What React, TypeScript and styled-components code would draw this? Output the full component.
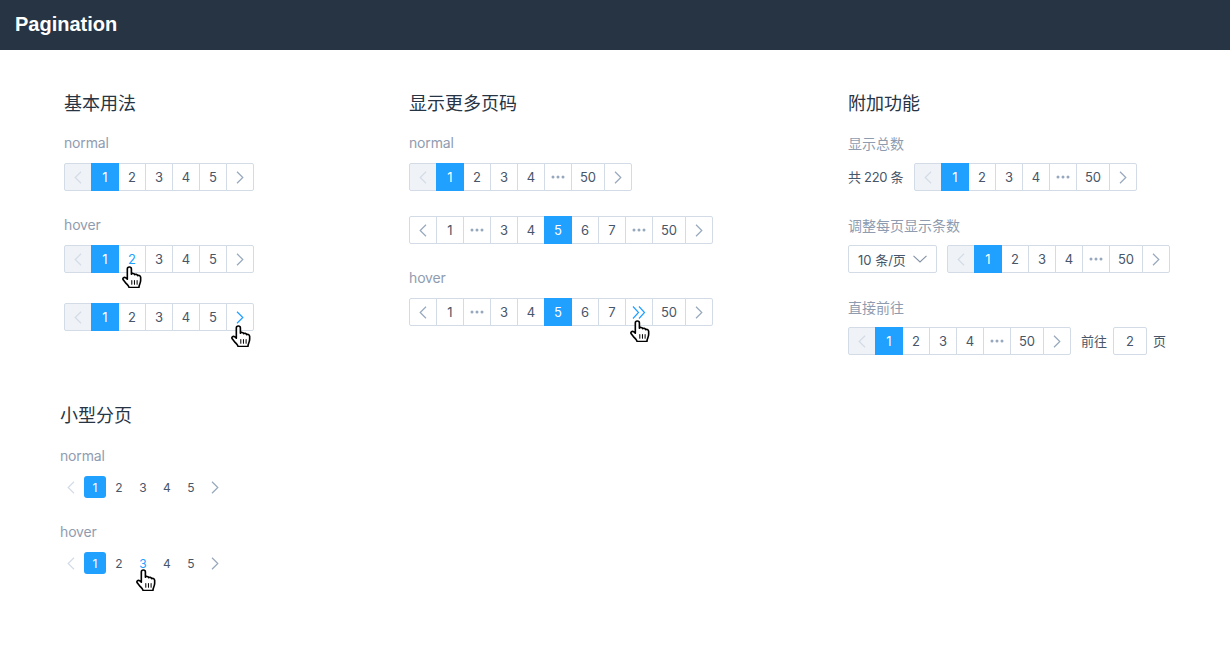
import React from "react";
import styled, { createGlobalStyle } from "styled-components";

const Global = createGlobalStyle`
  html, body { margin: 0; padding: 0; background: #fff; }
  body { font-family: Inter, "Noto Sans CJK SC", sans-serif; color: #475669; }
`;

const Page = styled.div`
  min-height: 100vh;
`;
const Header = styled.header`
  box-sizing: border-box;
  height: 50px;
  background: #273444;
  display: flex;
  align-items: center;
  padding: 0 0 3px 15px;
  color: #fff;
  font: bold 20px/24px "Liberation Sans", Arial, sans-serif;
`;
const Main = styled.main`
  padding-top: 40px;
`;
const TopRow = styled.div`
  display: flex;
  padding-left: 64px;
`;
const Column = styled.section<{ $w: number }>`
  width: ${(p) => p.$w}px;
  flex: none;
`;
const SmallSection = styled.section`
  margin-top: 47px;
  padding-left: 60px;
`;
const Title = styled.h2<{ $gap?: number }>`
  margin: 0 0 ${(p) => (p.$gap ?? 17) - 1}px;
  padding-top: 1px;
  font-size: 18px;
  font-weight: 400;
  line-height: 26px;
  color: #273444;
`;
const Label = styled.div<{ $top?: number; $cjk?: boolean }>`
  margin-top: ${(p) => p.$top ?? 0}px;
  margin-bottom: ${(p) => (p.$cjk ? 9 : 10)}px;
  padding-top: ${(p) => (p.$cjk ? 1 : 0)}px;
  font-size: 14px;
  line-height: 20px;
  letter-spacing: ${(p) => (p.$cjk ? 0 : -0.15)}px;
  color: #8f9cb0;
`;
const Line = styled.div<{ $top?: number; $gap?: number }>`
  display: flex;
  align-items: center;
  height: 28px;
  margin-top: ${(p) => p.$top ?? 0}px;
  gap: ${(p) => p.$gap ?? 10}px;
`;
const Pager = styled.div`
  display: flex;
  height: 28px;
  padding-left: 1px;
`;
const Cell = styled.div<{ $active?: boolean; $disabled?: boolean; $hover?: boolean; $wide?: boolean }>`
  position: relative;
  box-sizing: border-box;
  width: ${(p) => (p.$wide ? 34 : 28)}px;
  height: 28px;
  margin-left: -1px;
  display: flex;
  align-items: center;
  justify-content: center;
  font-size: 13px;
  border: 1px solid ${(p) => (p.$active ? "#20a0ff" : "#d3dce6")};
  background: ${(p) => (p.$active ? "#20a0ff" : p.$disabled ? "#eff2f7" : "#fff")};
  color: ${(p) => (p.$active ? "#fff" : p.$hover ? "#20a0ff" : "#475669")};
  z-index: ${(p) => (p.$active ? 1 : 0)};
  &:first-child { border-radius: 2px 0 0 2px; }
  &:last-child { border-radius: 0 2px 2px 0; }
`;
const SmallPager = styled.div`
  display: flex;
  gap: 2px;
  height: 22px;
`;
const SmallCell = styled.div<{ $active?: boolean; $hover?: boolean }>`
  position: relative;
  width: 22px;
  height: 22px;
  display: flex;
  align-items: center;
  justify-content: center;
  font-size: 12px;
  border-radius: 3px;
  background: ${(p) => (p.$active ? "#20a0ff" : "transparent")};
  color: ${(p) => (p.$active ? "#fff" : p.$hover ? "#20a0ff" : "#475669")};
`;
const Note = styled.span`
  font-size: 13px;
  line-height: 28px;
  color: #475669;
  white-space: nowrap;
`;
const Total = styled(Note)`
  width: 56px;
  flex: none;
  letter-spacing: -0.3px;
`;
const Select = styled.div`
  box-sizing: border-box;
  width: 89px;
  height: 28px;
  flex: none;
  display: flex;
  align-items: center;
  justify-content: space-between;
  padding: 0 9px;
  border: 1px solid #d3dce6;
  border-radius: 2px;
  font-size: 13px;
  white-space: nowrap;
`;
const JumpInput = styled.div`
  box-sizing: border-box;
  width: 34px;
  height: 28px;
  margin: 0 6px;
  display: flex;
  align-items: center;
  justify-content: center;
  border: 1px solid #d3dce6;
  border-radius: 2px;
  font-size: 13px;
`;
const Jump = styled.div`
  display: flex;
  align-items: center;
`;
const HandWrap = styled.span<{ $l: number; $t: number }>`
  position: absolute;
  left: ${(p) => p.$l}px;
  top: ${(p) => p.$t}px;
  width: 21px;
  height: 22px;
  z-index: 3;
`;

const Chevron = ({ dir, color }: { dir: "l" | "r"; color: string }) => (
  <svg width="8" height="13" viewBox="0 0 8 13" fill="none" stroke={color} strokeWidth="1.2">
    <path d={dir === "l" ? "M7 .8 1.2 6.5 7 12.2" : "M1 .8l5.8 5.7L1 12.2"} />
  </svg>
);
const DoubleChevron = () => (
  <svg width="14" height="13" viewBox="0 0 14 13" fill="none" stroke="#20a0ff" strokeWidth="1.2">
    <path d="M1 .5l5.5 6-5.5 6M7 .5l5.5 6-5.5 6" />
  </svg>
);
const Dots = () => (
  <svg width="14" height="4" viewBox="0 0 14 4" fill="#97a8be">
    <circle cx="2" cy="2" r="1.5" />
    <circle cx="7" cy="2" r="1.5" />
    <circle cx="12" cy="2" r="1.5" />
  </svg>
);
const Caret = () => (
  <svg width="14" height="8" viewBox="0 0 14 8" fill="none" stroke="#8492a6" strokeWidth="1.1">
    <path d="M.5.8 7 7 13.5.8" />
  </svg>
);
const Hand = ({ l, t }: { l: number; t: number }) => (
  <HandWrap $l={l} $t={t}>
    <svg width="21" height="22" viewBox="0.3 0 19.6 21.6" fill="#fff" stroke="#000" strokeWidth="1.6" strokeLinejoin="round" strokeLinecap="round">
      <path d="M6 13V3a2 2 0 0 1 4 0v5c.4-1 3-1 3.2.6.5-.8 2.7-.6 3 .9.6-.5 2.7-.2 2.9 1.6v3c0 2-.8 3.5-1.4 5l-.3 2H7.8c-.4-1.6-1.6-2.6-3-4L2 13.6c-1.3-1.5.8-3.2 2.3-2.1z" />
      <path d="M10.4 14.2v3.6M13 14.2v3.6M15.6 14.2v3.6" strokeWidth="1" fill="none" />
    </svg>
  </HandWrap>
);

type Item = number | "dots" | "more";
const short: Item[] = [1, 2, 3, 4, "dots", 50];
const five: Item[] = [1, 2, 3, 4, 5];
const mid: Item[] = [1, "dots", 3, 4, 5, 6, 7, "dots", 50];
const midHover: Item[] = [1, "dots", 3, 4, 5, 6, 7, "more", 50];

type PagerProps = {
  items: Item[];
  active?: number;
  hoverPage?: number;
  hoverNext?: boolean;
  hand?: [number, number];
};
const Pagination = ({ items, active = 1, hoverPage, hoverNext, hand }: PagerProps) => {
  const first = active === 1;
  return (
    <Pager>
      <Cell $disabled={first}>
        <Chevron dir="l" color={first ? "#d3dce6" : "#97a8be"} />
      </Cell>
      {items.map((it, i) => (
        <Cell key={i} $active={it === active} $hover={it === hoverPage} $wide={it === 50}>
          {it === "dots" ? <Dots /> : it === "more" ? <DoubleChevron /> : it}
          {hand && (it === hoverPage || it === "more") && <Hand l={hand[0]} t={hand[1]} />}
        </Cell>
      ))}
      <Cell>
        <Chevron dir="r" color={hoverNext ? "#20a0ff" : "#97a8be"} />
        {hoverNext && hand && <Hand l={hand[0]} t={hand[1]} />}
      </Cell>
    </Pager>
  );
};

const Small = ({ hoverPage }: { hoverPage?: number }) => (
  <SmallPager>
    <SmallCell>
      <Chevron dir="l" color="#d3dce6" />
    </SmallCell>
    {five.map((n) => (
      <SmallCell key={String(n)} $active={n === 1} $hover={n === hoverPage}>
        {n}
        {n === hoverPage && <Hand l={3} t={17} />}
      </SmallCell>
    ))}
    <SmallCell>
      <Chevron dir="r" color="#97a8be" />
    </SmallCell>
  </SmallPager>
);

export default function App() {
  return (
    <Page>
      <Global />
      <Header>Pagination</Header>
      <Main>
        <TopRow>
          <Column $w={345}>
            <Title>基本用法</Title>
            <Label>normal</Label>
            <Line><Pagination items={five} /></Line>
            <Label $top={24}>hover</Label>
            <Line><Pagination items={five} hoverPage={2} hand={[2, 20]} /></Line>
            <Line $top={30}><Pagination items={five} hoverNext hand={[3, 21]} /></Line>
          </Column>
          <Column $w={439}>
            <Title>显示更多页码</Title>
            <Label>normal</Label>
            <Line><Pagination items={short} /></Line>
            <Line $top={25}><Pagination items={mid} active={5} /></Line>
            <Label $top={24}>hover</Label>
            <Line><Pagination items={midHover} active={5} hand={[3, 21]} /></Line>
          </Column>
          <Column $w={340}>
            <Title>附加功能</Title>
            <Label $cjk>显示总数</Label>
            <Line><Total>共 220 条</Total><Pagination items={short} /></Line>
            <Label $cjk $top={24}>调整每页显示条数</Label>
            <Line>
              <Select>10 条/页<Caret /></Select>
              <Pagination items={short} />
            </Line>
            <Label $cjk $top={24}>直接前往</Label>
            <Line>
              <Pagination items={short} />
              <Jump><Note>前往</Note><JumpInput>2</JumpInput><Note>页</Note></Jump>
            </Line>
          </Column>
        </TopRow>
        <SmallSection>
          <Title $gap={18}>小型分页</Title>
          <Label>normal</Label>
          <Small />
          <Label $top={24}>hover</Label>
          <Small hoverPage={3} />
        </SmallSection>
      </Main>
    </Page>
  );
}
